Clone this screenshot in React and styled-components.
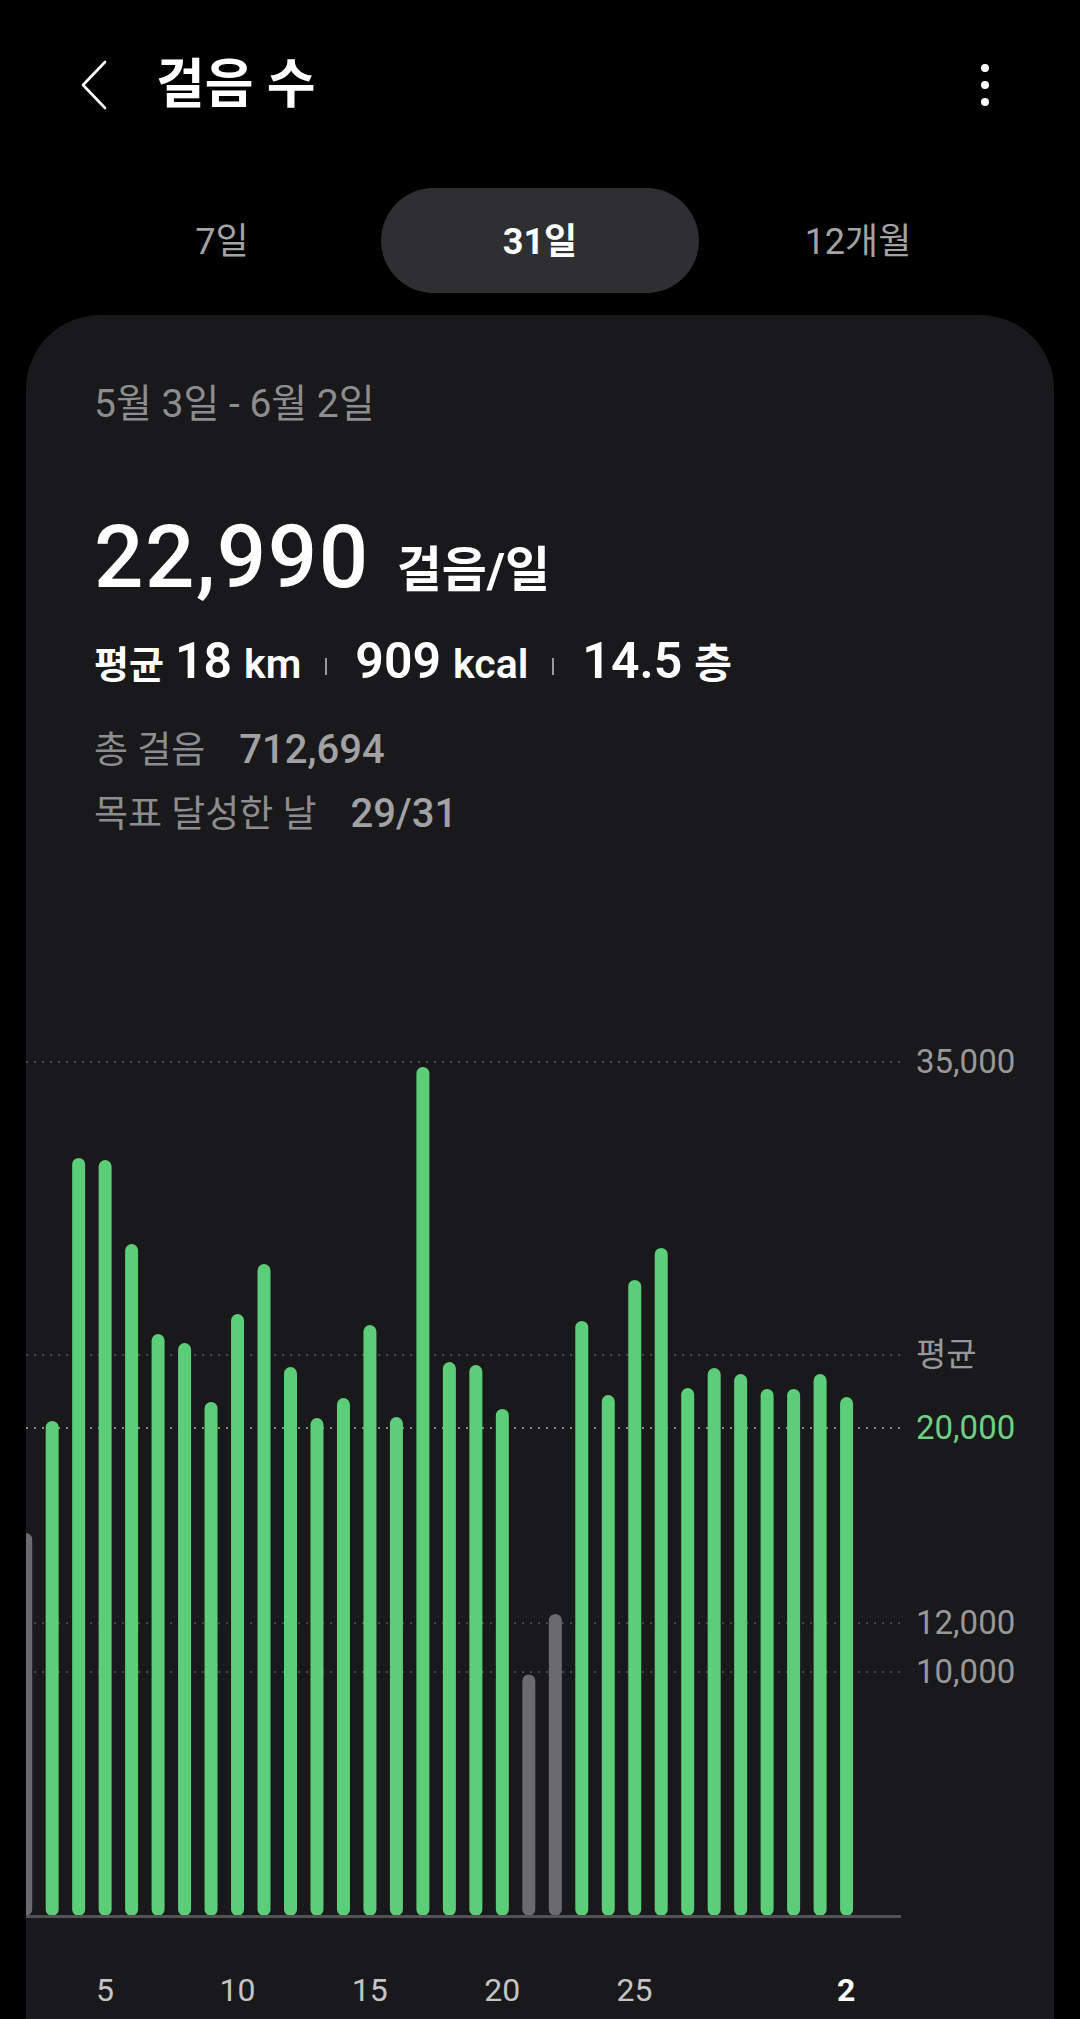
import React from 'react';
import styled, { createGlobalStyle } from 'styled-components';

const GlobalStyle = createGlobalStyle`
  html, body {
    margin: 0;
    padding: 0;
    background: #000;
    height: 2019px;
    overflow: hidden;
  }
  body {
    font-family: Roboto, "Noto Sans CJK KR", sans-serif;
    color: #fff;
  }
`;

const GOAL = 20000;
const AVG = 22990;
const PX_PER_STEP = 0.0244;
const SLOT = 26.48;
const BAR_W = 13;
const PLOT_W = 875;
const PLOT_H = 920;
const BASE_Y = 916;

// 5월 2일 ~ 6월 2일 (first one is partly scrolled out)
const days = [
  { label: '', steps: 15700 },
  { label: '', steps: 20290 },
  { label: '', steps: 31070 },
  { label: '5', steps: 30980 },
  { label: '', steps: 27540 },
  { label: '', steps: 23850 },
  { label: '', steps: 23480 },
  { label: '', steps: 21070 },
  { label: '10', steps: 24670 },
  { label: '', steps: 26720 },
  { label: '', steps: 22500 },
  { label: '', steps: 20410 },
  { label: '', steps: 21230 },
  { label: '15', steps: 24220 },
  { label: '', steps: 20450 },
  { label: '', steps: 34800 },
  { label: '', steps: 22700 },
  { label: '', steps: 22580 },
  { label: '20', steps: 20780 },
  { label: '', steps: 9900 },
  { label: '', steps: 12380 },
  { label: '', steps: 24390 },
  { label: '', steps: 21350 },
  { label: '25', steps: 26070 },
  { label: '', steps: 27380 },
  { label: '', steps: 21640 },
  { label: '', steps: 22460 },
  { label: '', steps: 22210 },
  { label: '', steps: 21600 },
  { label: '', steps: 21600 },
  { label: '', steps: 22210 },
  { label: '2', steps: 21270, today: true },
];

const gridLines = [
  { value: 35000, text: '35,000' },
  { value: AVG, text: '평균' },
  { value: GOAL, text: '20,000', goal: true },
  { value: 12000, text: '12,000' },
  { value: 10000, text: '10,000' },
];

const yOf = (v) => BASE_Y - v * PX_PER_STEP;
const xOf = (i) => -0.3 + SLOT * i;

const Page = styled.div`
  width: 1080px;
  height: 2019px;
  overflow: hidden;
  background: #000;
`;

const Header = styled.header`
  display: flex;
  align-items: center;
  height: 170px;
  padding: 0 91px 0 80px;
`;

const BackButton = styled.button`
  display: flex;
  background: none;
  border: none;
  padding: 0;
  margin-right: 48px;
  cursor: pointer;
`;

const Title = styled.h1`
  flex: 1;
  margin: 0;
  font-size: 53px;
  font-weight: 700;
  line-height: 1;
  color: #fff;
`;

const MenuButton = styled.button`
  display: flex;
  flex-direction: column;
  gap: 9px;
  background: none;
  border: none;
  padding: 0;
`;

const Dot = styled.span`
  width: 8px;
  height: 8px;
  border-radius: 50%;
  background: #fff;
`;

const Tabs = styled.nav`
  display: grid;
  grid-template-columns: repeat(3, 318px);
  justify-content: center;
  margin-top: 18px;
`;

const Tab = styled.button`
  height: 105px;
  border: none;
  border-radius: 53px;
  background: ${(p) => (p.$active ? '#2f2f31' : 'transparent')};
  color: ${(p) => (p.$active ? '#fff' : '#a3a3a3')};
  font-family: Roboto, "Noto Sans CJK KR", sans-serif;
  font-size: 36px;
  font-weight: ${(p) => (p.$active ? 700 : 400)};
  padding: 0 0 5px;
`;

const Card = styled.section`
  margin: 22px 26px 0;
  height: 1800px;
  background: #19191b;
  border-radius: 74px 74px 0 0;
  overflow: hidden;
`;

const Summary = styled.div`
  box-sizing: border-box;
  height: 504px;
  padding: 67px 0 0 68px;
`;

const DateRange = styled.div`
  font-size: 39px;
  line-height: 44px;
  color: #8d8d8f;
`;

const BigRow = styled.div`
  display: flex;
  align-items: baseline;
  gap: 27px;
  margin-top: 88px;
`;

const BigNumber = styled.span`
  font-size: 87px;
  font-weight: 500;
  letter-spacing: 1.5px;
  line-height: 86px;
`;

const BigUnit = styled.span`
  font-size: 49px;
  font-weight: 700;
`;

const StatsRow = styled.div`
  display: flex;
  align-items: baseline;
  margin-top: 31px;
  line-height: 58px;
  font-weight: 700;
`;

const StatLabel = styled.span`
  font-size: 38px;
  margin-right: 11px;
`;

const StatValue = styled.span`
  font-size: 50px;
  font-weight: 600;
  margin-right: 12px;
`;

const StatUnit = styled.span`
  font-size: 41px;
  font-weight: 600;
`;

const Divider = styled.span`
  align-self: center;
  width: 2px;
  height: 17px;
  background: #9a9a9a;
  margin: 6px 28px 0 24px;
`;

const InfoRow = styled.div`
  display: flex;
  align-items: baseline;
  margin-top: ${(p) => p.$gap}px;
  font-size: 37px;
  line-height: 42px;
  color: #8d8d8f;
`;

const InfoValue = styled.span`
  margin-left: 34px;
  font-weight: 500;
  font-size: 40px;
  color: #a2a2a4;
`;

const Chart = styled.div`
  position: relative;
  margin-top: 181px;
  height: ${PLOT_H}px;
`;

const Plot = styled.svg`
  display: block;
  width: ${PLOT_W}px;
  height: ${PLOT_H}px;
`;

const AxisLabel = styled.span`
  position: absolute;
  left: 890px;
  font-size: 33px;
  line-height: 38px;
  margin-top: -19px;
  color: ${(p) => (p.$goal ? '#6fce84' : '#98989a')};
`;

const XAxis = styled.div`
  display: flex;
  margin: 52px 0 0 -13.54px;
`;

const XTick = styled.span`
  flex: 0 0 ${SLOT}px;
  min-width: 0;
  display: flex;
  justify-content: center;
  white-space: nowrap;
  font-size: 32px;
  line-height: 36px;
  font-weight: ${(p) => (p.$today ? 700 : 400)};
  color: ${(p) => (p.$today ? '#fff' : '#c4c4c6')};
`;

const ChevronLeft = () => (
  <svg width="28" height="50" viewBox="0 0 28 50" fill="none">
    <path d="M25 2 L3 25 L25 48" stroke="#fff" strokeWidth="2.6" strokeLinecap="round" strokeLinejoin="round" />
  </svg>
);

const StepChart = () => (
  <Chart>
    <Plot viewBox={`0 0 ${PLOT_W} ${PLOT_H}`}>
      {gridLines.map((g) => (
        <line
          key={g.text}
          x1="0"
          x2={PLOT_W}
          y1={yOf(g.value)}
          y2={yOf(g.value)}
          stroke={g.goal ? '#7f8d84' : '#4a4a4c'}
          strokeWidth="2"
          strokeDasharray="2 6"
        />
      ))}
      {days.map((d, i) => {
        const h = d.steps * PX_PER_STEP;
        return (
          <rect
            key={i}
            x={xOf(i) - BAR_W / 2}
            y={BASE_Y - h}
            width={BAR_W}
            height={h}
            rx={BAR_W / 2}
            fill={d.steps >= GOAL ? '#5ccd78' : '#6b6b6d'}
          />
        );
      })}
      <rect x="0" y={BASE_Y - 1} width={PLOT_W} height="3" fill="#525254" />
    </Plot>
    {gridLines.map((g) => (
      <AxisLabel key={g.text} $goal={g.goal} style={{ top: yOf(g.value) }}>
        {g.text}
      </AxisLabel>
    ))}
  </Chart>
);

export default function App() {
  return (
    <Page>
      <GlobalStyle />
      <Header>
        <BackButton aria-label="뒤로">
          <ChevronLeft />
        </BackButton>
        <Title>걸음 수</Title>
        <MenuButton aria-label="더보기">
          <Dot />
          <Dot />
          <Dot />
        </MenuButton>
      </Header>

      <Tabs>
        <Tab>7일</Tab>
        <Tab $active>31일</Tab>
        <Tab>12개월</Tab>
      </Tabs>

      <Card>
        <Summary>
          <DateRange>5월 3일 - 6월 2일</DateRange>
          <BigRow>
            <BigNumber>22,990</BigNumber>
            <BigUnit>걸음/일</BigUnit>
          </BigRow>
          <StatsRow>
            <StatLabel>평균</StatLabel>
            <StatValue>18</StatValue>
            <StatUnit>km</StatUnit>
            <Divider />
            <StatValue>909</StatValue>
            <StatUnit>kcal</StatUnit>
            <Divider />
            <StatValue>14.5</StatValue>
            <StatUnit>층</StatUnit>
          </StatsRow>
          <InfoRow $gap={35}>
            총 걸음<InfoValue>712,694</InfoValue>
          </InfoRow>
          <InfoRow $gap={21}>
            목표 달성한 날<InfoValue>29/31</InfoValue>
          </InfoRow>
        </Summary>
        <StepChart />
        <XAxis>
          {days.map((d, i) => (
            <XTick key={i} $today={d.today}>
              {d.label}
            </XTick>
          ))}
        </XAxis>
      </Card>
    </Page>
  );
}
